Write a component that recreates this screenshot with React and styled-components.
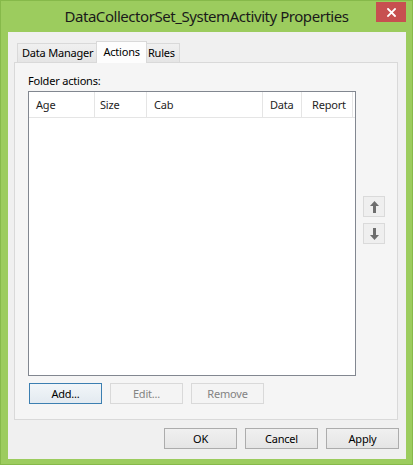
import styled, { createGlobalStyle } from 'styled-components';

const GlobalStyle = createGlobalStyle`
  html, body {
    margin: 0;
    padding: 0;
    background: #9ccc5e;
  }
  body {
    font-family: 'Segoe UI', 'Noto Sans', sans-serif;
    font-size: 11px;
    letter-spacing: -0.2px;
    color: #000;
  }
`;

const tabs = ['Data Manager', 'Actions', 'Rules'];

const columns = [
  { label: 'Age', width: 66, pad: 7 },
  { label: 'Size', width: 52, pad: 5 },
  { label: 'Cab', width: 116, pad: 7 },
  { label: 'Data', width: 39, pad: 7 },
  { label: 'Report', width: 51, pad: 10 },
];

function ArrowIcon({ down }) {
  return (
    <svg width="9" height="12" viewBox="0 0 9 12">
      <g fill="#6e6e6e" transform={down ? 'rotate(180 4.5 6)' : undefined}>
        <polygon points="4.5,0 9,5 0,5" />
        <rect x="3" y="4" width="3" height="8" />
      </g>
    </svg>
  );
}

function CloseIcon() {
  return (
    <svg width="9" height="9" viewBox="0 0 9 9">
      <path d="M1 1 L8 8 M8 1 L1 8" stroke="#fff" strokeWidth="1.8" strokeLinecap="square" />
    </svg>
  );
}

export default function App() {
  return (
    <>
      <GlobalStyle />
      <Window>
        <TitleBar>
          <span />
          <Title>DataCollectorSet_SystemActivity Properties</Title>
          <CloseButton>
            <CloseIcon />
          </CloseButton>
        </TitleBar>
        <Client>
          <TabStrip>
            {tabs.map((t) => (
              <Tab key={t} selected={t === 'Actions'}>
                {t}
              </Tab>
            ))}
          </TabStrip>
          <Panel>
            <Label>Folder actions:</Label>
            <span />
            <ListView>
              <Header>
                {columns.map((c) => (
                  <HeaderCell key={c.label} width={c.width} pad={c.pad}>
                    {c.label}
                  </HeaderCell>
                ))}
              </Header>
            </ListView>
            <ArrowColumn>
              <ArrowButton>
                <ArrowIcon />
              </ArrowButton>
              <ArrowButton>
                <ArrowIcon down />
              </ArrowButton>
            </ArrowColumn>
            <ButtonRow>
              <Button isDefault>Add...</Button>
              <Button disabled>Edit...</Button>
              <Button disabled>Remove</Button>
            </ButtonRow>
          </Panel>
          <DialogButtons>
            <Button>OK</Button>
            <Button>Cancel</Button>
            <Button>Apply</Button>
          </DialogButtons>
        </Client>
      </Window>
    </>
  );
}

const Window = styled.div`
  display: flex;
  flex-direction: column;
  width: 413px;
  height: 465px;
  box-sizing: border-box;
  border: 1px solid #86b94a;
  background: #9ccc5e;
`;

const TitleBar = styled.div`
  display: grid;
  grid-template-columns: 1fr auto 1fr;
  height: 31px;
`;

const Title = styled.div`
  align-self: center;
  margin-top: -1px;
  font-size: 15px;
  letter-spacing: -0.45px;
  color: #1a1a1a;
  white-space: nowrap;
`;

const CloseButton = styled.div`
  justify-self: end;
  display: flex;
  align-items: center;
  justify-content: center;
  width: 30px;
  height: 20px;
  margin: 1px 6px 0 0;
  background: #c75050;
`;

const Client = styled.div`
  display: flex;
  flex-direction: column;
  margin: 0 6px 5px 7px;
  padding: 9px 8px 10px 6px;
  background: #f0f0f0;
  flex: 1;
`;

const TabStrip = styled.div`
  position: relative;
  z-index: 1;
  display: flex;
  align-items: flex-end;
  height: 22px;
  margin-bottom: -1px;
  padding-left: 3px;
`;

const Tab = styled.div`
  box-sizing: border-box;
  height: ${({ selected }) => (selected ? '22px' : '19px')};
  margin: ${({ selected }) => (selected ? '0 -2px 0 -2px' : '0 0 1px 0')};
  padding: ${({ selected }) => (selected ? '0 6px 2px' : '0 4px')};
  line-height: ${({ selected }) => (selected ? '19px' : '18px')};
  border: 1px solid #d9d9d9;
  border-bottom: none;
  background: ${({ selected }) =>
    selected ? '#fdfdfd' : 'linear-gradient(#f0f0f0, #e5e5e5)'};
  position: relative;
  z-index: ${({ selected }) => (selected ? 2 : 1)};
  white-space: nowrap;

  & + & {
    margin-left: ${({ selected }) => (selected ? '-2px' : '-1px')};
  }
`;

const Panel = styled.div`
  display: grid;
  grid-template-columns: 328px 22px;
  grid-template-rows: 16px 286px 21px;
  column-gap: 7px;
  row-gap: 0;
  height: 358px;
  box-sizing: border-box;
  padding: 11px 0 14px 13px;
  border: 1px solid #d9d9d9;
  background: #f5f5f5;
`;

const Label = styled.div`
  line-height: 16px;
  margin-top: -1px;
  color: #000;
`;

const ListView = styled.div`
  margin-top: 1px;
  box-sizing: border-box;
  border: 1px solid #828790;
  background: #fff;
`;

const Header = styled.div`
  display: flex;
  height: 25px;
  border-bottom: 1px solid #e5e5e5;
`;

const HeaderCell = styled.div`
  box-sizing: border-box;
  width: ${({ width }) => width}px;
  padding-left: ${({ pad }) => pad}px;
  line-height: 25px;
  border-right: 1px solid #e5e5e5;
  color: #1e1e1e;
  white-space: nowrap;
`;

const ArrowColumn = styled.div`
  display: flex;
  flex-direction: column;
  gap: 6px;
  margin-top: 106px;
`;

const ArrowButton = styled.div`
  box-sizing: border-box;
  display: flex;
  align-items: center;
  justify-content: center;
  width: 22px;
  height: 21px;
  border: 1px solid #dadada;
  background: #efefef;
`;

const ButtonRow = styled.div`
  display: flex;
  gap: 8px;
  margin: 7px 0 0 1px;
  grid-column: 1 / span 2;
`;

const Button = styled.button`
  box-sizing: border-box;
  width: 73px;
  height: 21px;
  padding: 0 0 1px;
  font-family: inherit;
  font-size: 11px;
  letter-spacing: -0.2px;
  color: ${({ disabled }) => (disabled ? '#838383' : '#000')};
  border: 1px solid
    ${({ disabled, isDefault }) =>
      disabled ? '#d9d9d9' : isDefault ? '#3c7fb1' : '#acacac'};
  background: ${({ disabled, isDefault }) =>
    disabled
      ? '#f4f4f4'
      : isDefault
      ? 'linear-gradient(#f2f6f9, #e3eaf0)'
      : 'linear-gradient(#f0f0f0, #e5e5e5)'};
  border-radius: 0;
`;

const DialogButtons = styled.div`
  display: flex;
  justify-content: flex-end;
  gap: 8px;
  margin-top: 8px;
  margin-right: -1px;
`;
